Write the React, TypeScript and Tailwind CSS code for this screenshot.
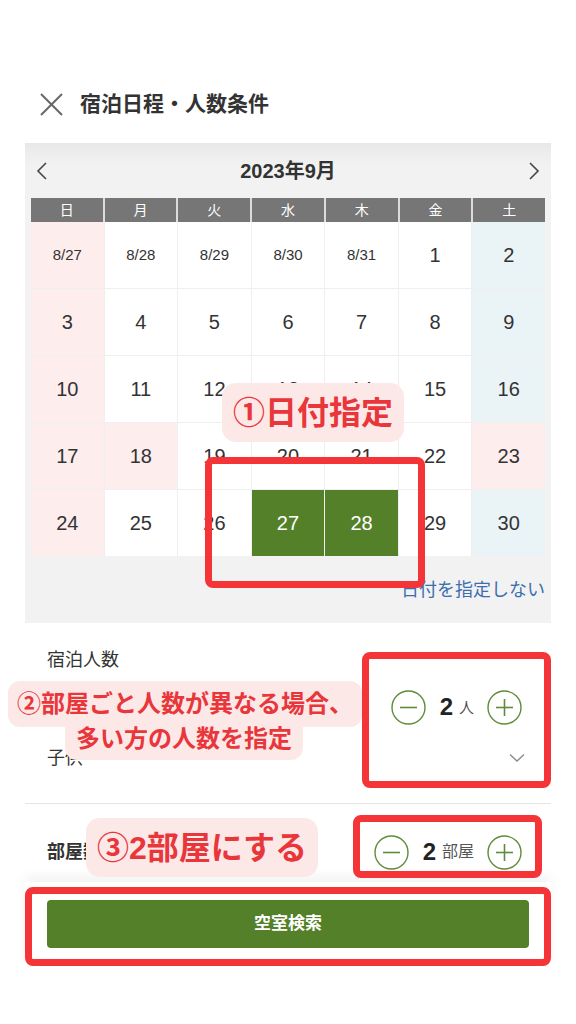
import React from "react";

type Day = { label: string; bg: string; small?: boolean; selected?: boolean };

const PINK = "bg-[#fdeded]";
const BLUE = "bg-[#eaf4f7]";
const WHITE = "bg-white";

const weekdays = ["日", "月", "火", "水", "木", "金", "土"];

// holidays in Sep 2023: 18 (敬老の日), 23 (秋分の日)
const holidays = [18, 23];

function buildDays(): Day[] {
  const days: Day[] = [];
  const prev = ["8/27", "8/28", "8/29", "8/30", "8/31"];
  prev.forEach((p, i) => days.push({ label: p, small: true, bg: i === 0 ? PINK : WHITE }));
  for (let d = 1; d <= 30; d++) {
    const col = days.length % 7;
    let bg = WHITE;
    if (col === 0) bg = PINK;
    if (col === 6) bg = BLUE;
    if (holidays.includes(d)) bg = PINK;
    days.push({ label: String(d), bg, selected: d === 27 || d === 28 });
  }
  return days;
}

function Circle({ kind }: { kind: "minus" | "plus" }) {
  return (
    <svg width="35" height="35" viewBox="0 0 35 35" fill="none">
      <circle cx="17.5" cy="17.5" r="16.5" stroke="#5e8c3c" strokeWidth="1.4" />
      <line x1="9" y1="17.5" x2="26" y2="17.5" stroke="#5e8c3c" strokeWidth="1.6" />
      {kind === "plus" && <line x1="17.5" y1="9" x2="17.5" y2="26" stroke="#5e8c3c" strokeWidth="1.6" />}
    </svg>
  );
}

function Stepper({ unit, unitClass }: { unit: string; unitClass: string }) {
  return (
    <div className="flex items-center">
      <Circle kind="minus" />
      <span className="ml-[14px] text-[24px] font-bold text-[#222] leading-none">2</span>
      <span className={`ml-[6px] text-[#555] leading-none ${unitClass}`}>{unit}</span>
      <div className="ml-[13px]">
        <Circle kind="plus" />
      </div>
    </div>
  );
}

export default function App() {
  const days = buildDays();

  return (
    <div className="relative w-[576px] h-[1024px] bg-white overflow-hidden font-['Liberation_Sans','Noto_Sans_CJK_JP',sans-serif] text-[#333]">
      {/* Header */}
      <div className="pt-[88px] pl-[40px] h-[120px] flex items-center gap-[17px]">
        <svg width="23" height="23" viewBox="0 0 23 23">
          <line x1="1" y1="1" x2="22" y2="22" stroke="#666" strokeWidth="2" />
          <line x1="22" y1="1" x2="1" y2="22" stroke="#666" strokeWidth="2" />
        </svg>
        <h1 className="text-[21px] font-bold text-[#333]">宿泊日程・人数条件</h1>
      </div>

      {/* Calendar */}
      <div className="mt-[23px] mx-[25px] bg-[#f2f2f2]">
        <div className="h-[55px] flex items-center justify-between px-[10px] bg-gradient-to-b from-[#e8e8e8] to-[#f2f2f2] to-40%">
          <svg width="14" height="20" viewBox="0 0 14 20">
            <polyline points="11,2 3,10 11,18" fill="none" stroke="#444" strokeWidth="1.6" />
          </svg>
          <span className="text-[20px] font-bold text-[#333]">2023年9月</span>
          <svg width="14" height="20" viewBox="0 0 14 20">
            <polyline points="3,2 11,10 3,18" fill="none" stroke="#444" strokeWidth="1.6" />
          </svg>
        </div>

        <div className="px-[6px]">
          <div className="grid grid-cols-7 gap-[2px] bg-[#dcdcdc]">
            {weekdays.map((w) => (
              <div key={w} className="h-[24px] bg-[#767676] text-white text-[14px] flex items-center justify-center">
                {w}
              </div>
            ))}
          </div>
          <div className="grid grid-cols-7 gap-px bg-[#efefef]">
            {days.map((d) => (
              <div
                key={d.label}
                className={`h-[66px] flex items-center justify-center ${
                  d.selected ? "bg-[#548029] text-white" : `${d.bg} text-[#333]`
                } ${d.small ? "text-[15px]" : "text-[20px]"}`}
              >
                {d.label}
              </div>
            ))}
          </div>
        </div>

        <div className="h-[67px] pt-[21px] pr-[6px] text-right text-[18px] leading-[26px] text-[#3b6fb0]">
          日付を指定しない
        </div>
      </div>

      {/* People */}
      <div className="mx-[25px] border-b border-[#e5e5e5] pb-[25px]">
        <div className="pt-[26px] pl-[22px] text-[18px] leading-[22px] text-[#333]">宿泊人数</div>
        <div className="mt-[12px] h-[48px] flex items-center justify-between pl-[22px] pr-[29px]">
          <span className="text-[18px]">大人</span>
          <Stepper unit="人" unitClass="text-[15px]" />
        </div>
        <div className="mt-[7px] h-[40px] flex items-center justify-between pl-[22px] pr-[26px]">
          <span className="text-[18px]">子供</span>
          <svg width="16" height="10" viewBox="0 0 16 10">
            <polyline points="1,1.5 8,8 15,1.5" fill="none" stroke="#888" strokeWidth="1.3" />
          </svg>
        </div>
      </div>

      {/* Rooms */}
      <div className="mx-[25px] pt-[28px] h-[78px]">
        <div className="h-[40px] flex items-center justify-between pl-[22px] pr-[29px]">
          <span className="text-[18px] font-bold text-[#333]">部屋数</span>
          <Stepper unit="部屋" unitClass="text-[16px]" />
        </div>
      </div>

      {/* Footer */}
      <div className="mx-[25px] pt-[18px] pb-[20px] px-[22px] bg-white shadow-[0_-6px_10px_rgba(0,0,0,0.05)]">
        <button className="w-full h-[48px] rounded-[4px] bg-[#548029] text-white text-[17px] font-bold">空室検索</button>
      </div>

      {/* Annotations */}
      <div className="absolute left-[222px] top-[383px] w-[182px] h-[59px] rounded-[14px] bg-[#fde8e8] flex items-center justify-center text-[32px] font-bold text-[#e9363b] leading-none">
        ①日付指定
      </div>
      <div className="absolute left-[205px] top-[457px] w-[220px] h-[131px] rounded-[8px] border-[7px] border-[#f53438]" />

      <div className="absolute left-[8px] top-[681px] w-[354px] h-[46px] rounded-[12px] bg-[#fde8e8] flex items-center justify-center text-[24px] font-bold text-[#e9363b] leading-none">
        ②部屋ごと人数が異なる場合、
      </div>
      <div className="absolute left-[65px] top-[727px] w-[238px] h-[33px] rounded-b-[12px] bg-[#fde8e8] flex items-start justify-center text-[24px] font-bold text-[#e9363b] leading-none">
        多い方の人数を指定
      </div>
      <div className="absolute left-[362px] top-[652px] w-[189px] h-[136px] rounded-[8px] border-[7px] border-[#f53438]" />

      <div className="absolute left-[86px] top-[818px] w-[232px] h-[59px] rounded-[14px] bg-[#fde8e8] flex items-center justify-center text-[32px] font-bold text-[#e9363b] leading-none">
        ③2部屋にする
      </div>
      <div className="absolute left-[353px] top-[815px] w-[189px] h-[63px] rounded-[8px] border-[7px] border-[#f53438]" />

      <div className="absolute left-[25px] top-[887px] w-[526px] h-[79px] rounded-[8px] border-[7px] border-[#f53438]" />
    </div>
  );
}
